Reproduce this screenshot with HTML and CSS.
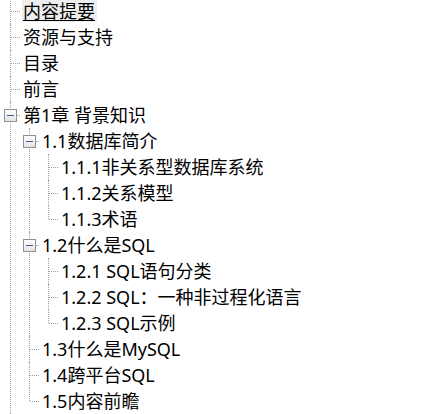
FILE: index.html
```html
<!DOCTYPE html>
<html lang="zh-CN">
<head>
<meta charset="utf-8">
<title>目录</title>
<link rel="stylesheet" href="styles.css">
</head>
<body>
<ul class="tree">
  <li><div class="row"><span class="label sel">内容提要</span></div></li>
  <li><div class="row"><span class="label">资源与支持</span></div></li>
  <li><div class="row"><span class="label">目录</span></div></li>
  <li><div class="row"><span class="label">前言</span></div></li>
  <li><div class="row"><span class="toggle"></span><span class="label">第1章 背景知识</span></div>
    <ul>
      <li><div class="row"><span class="toggle"></span><span class="label">1.1数据库简介</span></div>
        <ul>
          <li><div class="row"><span class="label">1.1.1非关系型数据库系统</span></div></li>
          <li><div class="row"><span class="label">1.1.2关系模型</span></div></li>
          <li class="last"><div class="row"><span class="label">1.1.3术语</span></div></li>
        </ul>
      </li>
      <li><div class="row"><span class="toggle"></span><span class="label">1.2什么是SQL</span></div>
        <ul>
          <li><div class="row"><span class="label">1.2.1 SQL语句分类</span></div></li>
          <li><div class="row"><span class="label">1.2.2 SQL：一种非过程化语言</span></div></li>
          <li class="last"><div class="row"><span class="label">1.2.3 SQL示例</span></div></li>
        </ul>
      </li>
      <li><div class="row"><span class="label">1.3什么是MySQL</span></div></li>
      <li><div class="row"><span class="label">1.4跨平台SQL</span></div></li>
      <li class="last"><div class="row"><span class="label">1.5内容前瞻</span></div></li>
    </ul>
  </li>
</ul>
</body>
</html>
```

FILE: styles.css
```css
html, body {
  margin: 0;
  padding: 0;
  background: #ffffff;
  overflow: hidden;
}

body {
  font-family: "Noto Sans", "Noto Sans CJK SC", sans-serif;
  font-size: 18px;
  color: #000000;
}

.tree {
  list-style: none;
  margin: -2px 0 0 0;
  padding: 0;
}

.tree ul {
  list-style: none;
  margin: 0;
  padding: 0 0 0 19px;
}

.tree li {
  position: relative;
}

.tree li::before {
  content: "";
  position: absolute;
  left: 10px;
  top: 0;
  bottom: 0;
  border-left: 1px dotted #a0a0a0;
}

.tree > li:first-child::before {
  top: -2px;
}

.tree li.last::before {
  bottom: auto;
  height: 13px;
}

.row {
  position: relative;
  height: 26px;
  display: flex;
  align-items: center;
  padding-left: 22px;
  white-space: nowrap;
}

.row::before {
  content: "";
  position: absolute;
  left: 11px;
  top: 13px;
  width: 9px;
  border-top: 1px dotted #a0a0a0;
}

.toggle {
  position: absolute;
  left: 4px;
  top: 7px;
  width: 11px;
  height: 11px;
  border: 1px solid #8e8f8f;
  background: linear-gradient(#ffffff, #e3e3e3);
  z-index: 1;
}

.toggle::after {
  content: "";
  position: absolute;
  left: 2px;
  top: 5px;
  width: 7px;
  height: 1px;
  background: #3b5b95;
}

.label {
  height: 22px;
  line-height: 22px;
  padding: 0 2px 0 1px;
}

.label.sel {
  background: #eeeeee;
  text-decoration: underline;
  text-decoration-thickness: 1px;
  text-underline-offset: 2px;
}
```
